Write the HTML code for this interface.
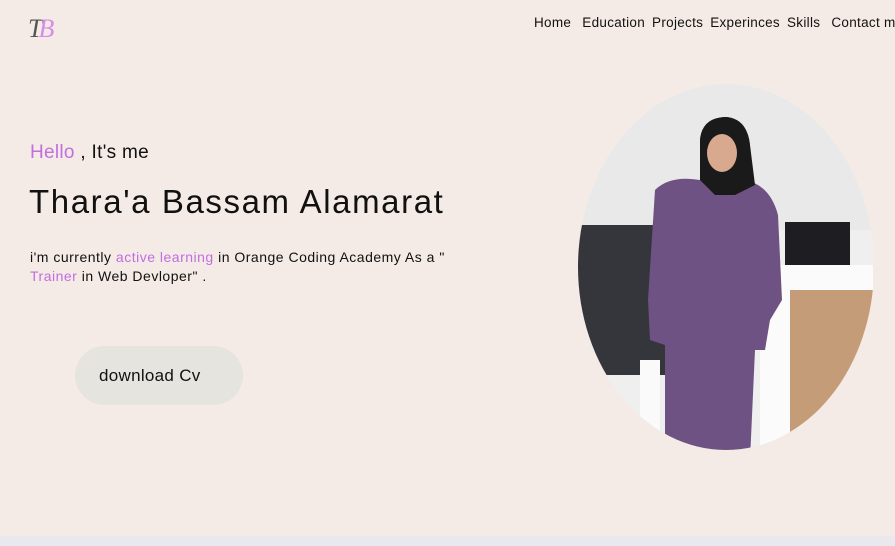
<!DOCTYPE html>
<html><head><meta charset="utf-8"><style>
html,body{margin:0;padding:0;}
body{width:895px;height:546px;background:#f5ebe6;position:relative;overflow:hidden;font-family:"Liberation Sans",sans-serif;color:#111;}
.logo{position:absolute;left:28px;top:14px;font-family:"Liberation Serif",serif;font-style:italic;font-size:26px;letter-spacing:-4px;}
nav{position:absolute;left:534px;top:15px;font-size:13.5px;white-space:nowrap;letter-spacing:0.3px;}
nav span{margin-right:7px;}
.hello{position:absolute;left:30px;top:142px;font-size:19px;letter-spacing:0.3px;}
.name{position:absolute;left:29px;top:183px;font-size:33px;letter-spacing:1.6px;}
.desc{position:absolute;left:30px;top:248px;font-size:14px;line-height:18.5px;width:440px;letter-spacing:0.5px;}
.p{color:#c06ee0;}
.btn{position:absolute;left:75px;top:346px;width:168px;height:59px;border-radius:30px;background:#e6e4df;font-size:17px;line-height:59px;text-indent:24px;letter-spacing:0.3px;}
.foot{position:absolute;left:0;top:536px;width:895px;height:10px;background:#e8e8ee;}
svg{position:absolute;left:0;top:0;}
</style></head><body>
<div class="logo"><span style="color:#555">T</span><span style="color:#d58ee8">B</span></div>
<nav><span>Home</span> <span>Education</span><span>Projects</span><span>Experinces</span><span>Skills</span> <span>Contact me</span></nav>
<div class="hello"><span class="p">Hello</span> , It's me</div>
<div class="name">Thara'a Bassam Alamarat</div>
<div class="desc">i'm currently <span class="p">active learning</span> in Orange Coding Academy As a "<br><span class="p">Trainer</span> in Web Devloper" .</div>
<div class="btn">download Cv</div>
<svg width="895" height="546">
<defs><clipPath id="c"><ellipse cx="726" cy="267" rx="148" ry="183"/></clipPath></defs>
<g clip-path="url(#c)">
<rect x="570" y="80" width="310" height="380" fill="#efefef"/>
<rect x="570" y="80" width="310" height="150" fill="#e9e9e9"/>
<rect x="578" y="225" width="90" height="150" fill="#35363c"/>
<rect x="785" y="222" width="65" height="45" fill="#1e1e22"/>
<rect x="640" y="360" width="20" height="100" fill="#fafafa"/>
<rect x="760" y="265" width="120" height="200" fill="#fbfbfb"/>
<rect x="790" y="290" width="90" height="170" fill="#c49d78"/>
<path d="M655 190 Q670 175 700 180 L745 180 Q770 185 778 215 L782 300 L770 320 L765 350 L755 350 L750 460 L665 460 L665 345 L650 340 L648 300 Z" fill="#6e5283"/>
<path d="M700 140 Q702 118 725 117 Q747 118 750 145 L755 185 L735 195 L715 195 L700 180 Z" fill="#1a1a1a"/>
<ellipse cx="722" cy="153" rx="15" ry="19" fill="#d9a98f"/>
<path d="M700 140 Q702 118 725 117 Q747 118 750 145 L737 138 Q725 128 710 138 Z" fill="#1a1a1a"/>
</g>
<line x1="874" y1="80" x2="874" y2="460" stroke="#f5ebe6" stroke-width="2"/>
</svg>
<div class="foot"></div>
</body></html>
